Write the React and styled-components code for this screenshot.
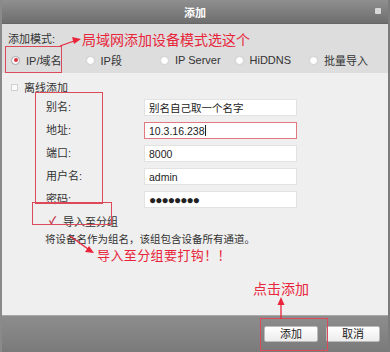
import React from "react";
import styled, { createGlobalStyle } from "styled-components";

const Global = createGlobalStyle`
  html, body { margin: 0; padding: 0; background: #fff; }
  body { font-family: "Noto Sans CJK SC", "Liberation Sans", sans-serif; }
  * { box-sizing: border-box; }
`;

const FONT = `"Liberation Sans", "Noto Sans CJK SC", sans-serif`;
const RED = "#e8253a";
const BOX = "#dc4a5a";

const Dialog = styled.div`
  position: relative;
  width: 390px;
  height: 352px;
  display: flex;
  flex-direction: column;
  border-left: 2px solid #8a8a8a;
  border-right: 2px solid #7c7c7c;
  background: #efefef;
  font-family: ${FONT};
  font-size: 11px;
  color: #333;
  overflow: hidden;
`;

const TitleBar = styled.div`
  height: 24px;
  flex: none;
  display: flex;
  align-items: center;
  justify-content: center;
  position: relative;
  background: linear-gradient(#8f8f8f, #6e6e6e);
  border-bottom: 1px solid #666;
  color: #fff;
  font-size: 11px;
  font-weight: bold;
`;

const Close = styled.span`
  position: absolute;
  right: 7px;
  top: 8px;
  width: 6px;
  height: 6px;
  background: #d8d8d8;
  border-radius: 1px;
`;

const ModeSection = styled.div`
  height: 49px;
  flex: none;
  background: #dddddd;
  padding: 8px 0 0 6px;
  display: flex;
  flex-direction: column;
`;

const ModeLabel = styled.div`
  height: 14px;
  line-height: 14px;
`;

const RadioRow = styled.div`
  display: grid;
  grid-template-columns: repeat(5, 74.5px);
  margin-top: 6px;
  padding-left: 3px;
  height: 16px;
  align-items: center;
`;

const RadioItem = styled.label`
  display: flex;
  align-items: center;
  gap: 6px;
  white-space: nowrap;
`;

const RadioDot = styled.span`
  width: 9px;
  height: 9px;
  border-radius: 50%;
  background: #fff;
  border: 1px solid ${(p) => (p.$on ? "#aaa" : "#d4d4d4")};
  box-shadow: 0 0 1px #ccc;
  display: flex;
  align-items: center;
  justify-content: center;
  &::after {
    content: "";
    width: 4px;
    height: 4px;
    border-radius: 50%;
    background: ${(p) => (p.$on ? "#d9303a" : "transparent")};
  }
`;

const Body = styled.div`
  flex: 1;
  padding: 8px 0 0 9px;
  display: flex;
  flex-direction: column;
  background: #efefef;
`;

const CheckRow = styled.label`
  display: flex;
  align-items: center;
  gap: 6px;
  height: 12px;
  margin-left: ${(p) => p.$indent || 0}px;
`;

const CheckBox = styled.span`
  width: 7px;
  height: 7px;
  border: 1px solid #d0d0d0;
  background: #fafafa;
`;

const CheckMark = styled.span`
  width: 8px;
  color: #c0283a;
  font-size: 10px;
  font-weight: bold;
  line-height: 10px;
`;

const Form = styled.div`
  display: grid;
  grid-template-columns: 98px 153px;
  grid-auto-rows: 17px;
  row-gap: 6px;
  margin: 6px 0 0 35px;
  align-items: center;
`;

const Label = styled.div`
  line-height: 17px;
`;

const Input = styled.div`
  height: 17px;
  background: #fff;
  border: 1px solid ${(p) => (p.$focus ? "#e07a80" : "#e2e2e2")};
  padding: 0 4px;
  display: flex;
  align-items: center;
  color: #222;
  font-size: ${(p) => (p.$pw ? "12px" : "10.5px")};
  letter-spacing: ${(p) => (p.$pw ? "-1px" : "0")};
`;

const Caret = styled.span`
  display: inline-block;
  width: 1px;
  height: 11px;
  background: #222;
  margin-left: 1px;
`;

const GroupRow = styled(CheckRow)`
  margin-top: 6px;
  height: 14px;
`;

const Note = styled.div`
  margin: 5px 0 0 34px;
  font-size: 10.5px;
  line-height: 13px;
`;

const Footer = styled.div`
  height: 37px;
  flex: none;
  background: linear-gradient(#8d8d8d, #7a7a7a);
  border-top: 1px solid #a8a8a8;
  display: flex;
  justify-content: flex-end;
  align-items: center;
  gap: 8px;
  padding: 0 8px 0 0;
`;

const Button = styled.button`
  width: 54px;
  height: 16px;
  border: 1px solid #bbb;
  border-radius: 2px;
  background: linear-gradient(#ffffff, #ececec);
  font-family: ${FONT};
  font-size: 11px;
  color: #222;
  padding: 0;
  line-height: 14px;
`;

const Box = styled.div`
  position: absolute;
  border: 1.5px solid ${BOX};
  pointer-events: none;
`;

const Annot = styled.div`
  position: absolute;
  color: ${RED};
  font-family: "Noto Sans CJK SC", sans-serif;
  font-size: ${(p) => p.$size || 14}px;
  letter-spacing: ${(p) => p.$ls || 0}px;
  line-height: 1;
  white-space: nowrap;
`;

const Overlay = styled.svg`
  position: absolute;
  left: -2px;
  top: 0;
  pointer-events: none;
`;

const modes = ["IP/域名", "IP段", "IP Server", "HiDDNS", "批量导入"];

export default function App() {
  return (
    <>
      <Global />
      <Dialog>
        <TitleBar>
          添加
          <Close />
        </TitleBar>
        <ModeSection>
          <ModeLabel>添加模式:</ModeLabel>
          <RadioRow>
            {modes.map((m, i) => (
              <RadioItem key={m}>
                <RadioDot $on={i === 0} />
                {m}
              </RadioItem>
            ))}
          </RadioRow>
        </ModeSection>
        <Body>
          <CheckRow>
            <CheckBox />
            离线添加
          </CheckRow>
          <Form>
            <Label>别名:</Label>
            <Input>别名自己取一个名字</Input>
            <Label>地址:</Label>
            <Input $focus>
              10.3.16.238
              <Caret />
            </Input>
            <Label>端口:</Label>
            <Input>8000</Input>
            <Label>用户名:</Label>
            <Input>admin</Input>
            <Label>密码:</Label>
            <Input $pw>●●●●●●●●</Input>
          </Form>
          <GroupRow $indent={38}>
            <CheckMark>✓</CheckMark>
            导入至分组
          </GroupRow>
          <Note>将设备名作为组名，该组包含设备所有通道。</Note>
        </Body>
        <Footer>
          <Button>添加</Button>
          <Button>取消</Button>
        </Footer>

        <Box style={{ left: 3, top: 46, width: 57, height: 27 }} />
        <Box style={{ left: 33, top: 92, width: 68, height: 112 }} />
        <Box style={{ left: 30, top: 202, width: 80, height: 23 }} />
        <Box style={{ left: 258, top: 318, width: 68, height: 33 }} />

        <Annot style={{ left: 80, top: 32 }} $size={14}>局域网添加设备模式选这个</Annot>
        <Annot style={{ left: 95, top: 248 }} $size={13} $ls={0.4}>导入至分组要打钩！！</Annot>
        <Annot style={{ left: 251, top: 281 }} $size={14}>点击添加</Annot>

        <Overlay width="390" height="352" viewBox="0 0 390 352">
          <line x1="60" y1="46" x2="74" y2="41" stroke={RED} strokeWidth="1.3" />
          <polygon points="81,39 72,37 74,44" fill={RED} />
          <line x1="70" y1="236" x2="88" y2="249" stroke={RED} strokeWidth="1.3" />
          <polygon points="94,253 85,252 89,246" fill={RED} />
          <line x1="281" y1="319" x2="281" y2="304" stroke={RED} strokeWidth="1.3" />
          <polygon points="281,297 277.5,305 284.5,305" fill={RED} />
        </Overlay>
      </Dialog>
    </>
  );
}
